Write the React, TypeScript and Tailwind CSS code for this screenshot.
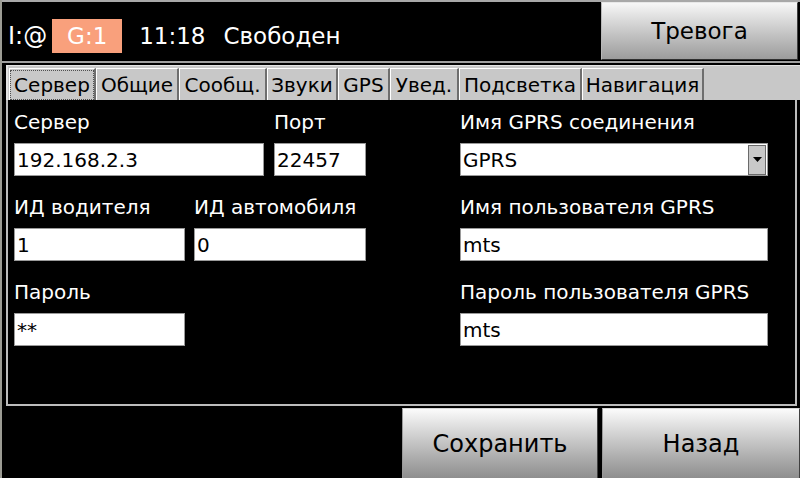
import React from 'react';

const tabs = [
  { label: 'Сервер', w: 'w-[87px]', active: true },
  { label: 'Общие', w: 'w-[83px]' },
  { label: 'Сообщ.', w: 'w-[88px]' },
  { label: 'Звуки', w: 'w-[71px]' },
  { label: 'GPS', w: 'w-[52px]' },
  { label: 'Увед.', w: 'w-[69px]' },
  { label: 'Подсветка', w: 'w-[123px]' },
  { label: 'Навигация', w: 'w-[122px]' },
];

function Field({ label, value, w }: { label: string; value: string; w: string }) {
  return (
    <div className={`flex flex-col ${w}`}>
      <div className="h-[24px] whitespace-nowrap text-[20px] leading-[24px] text-white">{label}</div>
      <div className="mt-[9px] flex h-[33px] items-center border border-[#9a9a9a] bg-white pl-[2px] text-[20px] text-black">
        {value}
      </div>
    </div>
  );
}

function Select({ label, value }: { label: string; value: string }) {
  return (
    <div className="flex w-[308px] flex-col">
      <div className="h-[24px] whitespace-nowrap text-[20px] leading-[24px] text-white">{label}</div>
      <div className="mt-[9px] flex h-[33px] items-center border border-[#9a9a9a] bg-white pl-[2px] text-[20px] text-black">
        <span className="flex-1">{value}</span>
        <div className="mr-[1px] flex h-[30px] w-[18px] items-center justify-center border border-[#6a6a6a] bg-[#c8c8c8]">
          <svg width="9" height="5" viewBox="0 0 9 5">
            <path d="M0 0h9L4.5 5z" fill="#000" />
          </svg>
        </div>
      </div>
    </div>
  );
}

export default function App() {
  return (
    <div className="flex h-[478px] w-[800px] flex-col overflow-hidden border-l-2 border-[#9c9c94] bg-black font-['DejaVu_Sans',Verdana,sans-serif]">
      {/* header */}
      <div className="flex h-[61px] items-start border-t-2 border-[#a8a8a8]">
        <div className="flex h-[59px] flex-1 items-center pt-[9px] pl-[6px] text-[23px] text-white">
          <span className="text-[24px]">I:@</span>
          <span className="ml-[5px] flex h-[34px] w-[70px] items-center justify-center bg-[#f9a07c]">G:1</span>
          <span className="ml-[17px]">11:18</span>
          <span className="ml-[18px]">Свободен</span>
        </div>
        <button className="mr-[2px] h-[58px] w-[197px] border border-l-[#b8b8b8] border-t-[#e8e8e8] border-r-[#404040] border-b-[#303030] bg-gradient-to-b from-[#f7f7f7] to-[#9c9c9c] text-[23px] text-black">
          Тревога
        </button>
      </div>
      <div className="h-[2px] bg-[#a0a0a0]" />
      <div className="h-[2px]" />

      {/* tab strip */}
      <div className="ml-[4px] flex h-[35px] items-end border-t border-l-2 border-[#e4e4e4] bg-[#c8c8c8] pl-[1px]">
        {tabs.map((t) => (
          <div
            key={t.label}
            className={`flex h-[32px] ${t.w} items-center justify-center border-l border-t border-r-2 border-l-white border-t-white border-r-[#6e6e6e] text-[20px] text-black`}
          >
            {t.active ? (
              <span className="flex h-[30px] w-full items-center justify-center border border-dotted border-[#505050]">
                {t.label}
              </span>
            ) : (
              t.label
            )}
          </div>
        ))}
      </div>

      {/* panel */}
      <div className="mr-[3px] ml-[4px] flex h-[306px] flex-col gap-[19px] border-x-2 border-b-2 border-[#bcbcbc] pt-[10px] pl-[6px]">
        <div className="flex">
          <Field label="Сервер" value="192.168.2.3" w="w-[250px]" />
          <div className="ml-[10px]">
            <Field label="Порт" value="22457" w="w-[92px]" />
          </div>
          <div className="ml-[94px]">
            <Select label="Имя GPRS соединения" value="GPRS" />
          </div>
        </div>
        <div className="flex">
          <Field label="ИД водителя" value="1" w="w-[171px]" />
          <div className="ml-[9px]">
            <Field label="ИД автомобиля" value="0" w="w-[172px]" />
          </div>
          <div className="ml-[94px]">
            <Field label="Имя пользователя GPRS" value="mts" w="w-[308px]" />
          </div>
        </div>
        <div className="flex">
          <Field label="Пароль" value="**" w="w-[171px]" />
          <div className="ml-[275px]">
            <Field label="Пароль пользователя GPRS" value="mts" w="w-[308px]" />
          </div>
        </div>
      </div>

      {/* bottom buttons */}
      <div className="mt-[2px] flex flex-1 justify-end gap-[4px]">
        <button className="w-[196px] border border-l-[#9a9a9a] border-t-[#d8d8d8] border-r-[#404040] border-b-0 bg-gradient-to-b from-[#fbfbfb] to-[#8e8e8e] text-[24px] text-black">
          Сохранить
        </button>
        <button className="w-[198px] border border-l-[#9a9a9a] border-t-[#d8d8d8] border-r-[#404040] border-b-0 bg-gradient-to-b from-[#fbfbfb] to-[#8e8e8e] text-[24px] text-black">
          Назад
        </button>
      </div>
    </div>
  );
}
